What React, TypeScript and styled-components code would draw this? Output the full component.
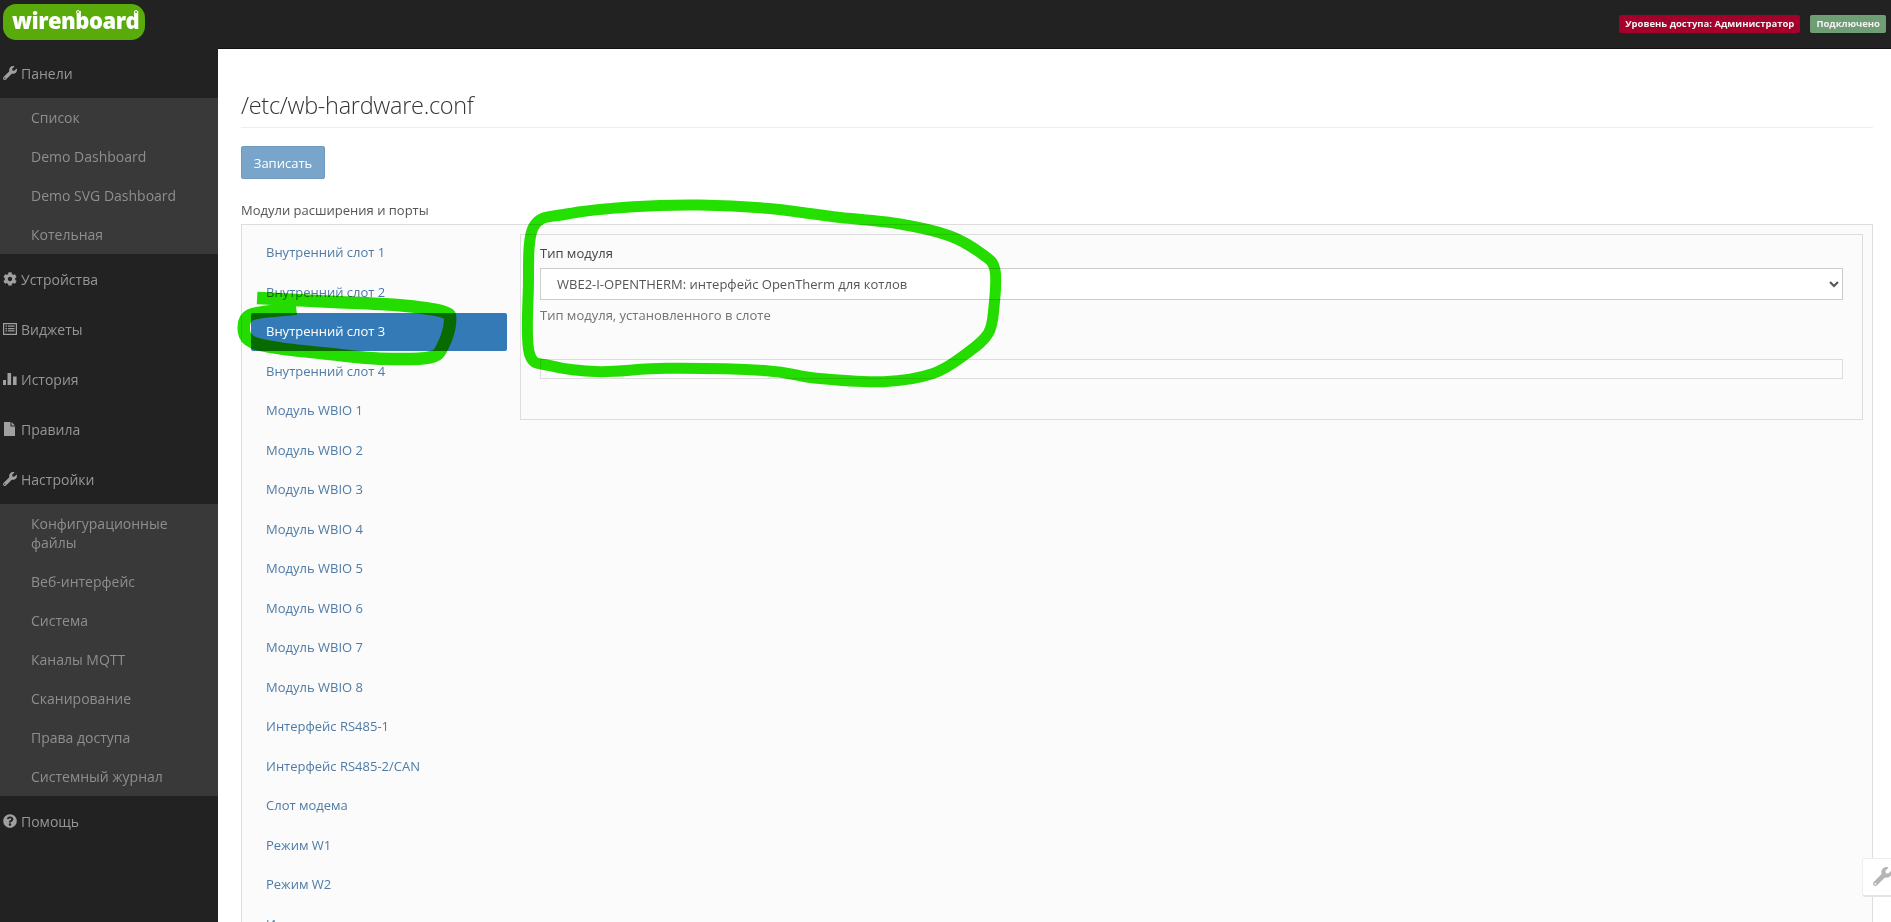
import React from "react";
import styled, { createGlobalStyle } from "styled-components";
import { FaWrench, FaCog, FaQuestionCircle } from "react-icons/fa";

const Global = createGlobalStyle`
  html, body { margin: 0; padding: 0; height: 100%; overflow: hidden; background: #222; }
  body { font-family: "Open Sans", "Liberation Sans", sans-serif; font-size: 13px; color: #555; }
  * { box-sizing: border-box; }
`;

const Page = styled.div`
  position: relative;
  width: 1891px;
  height: 922px;
  overflow: hidden;
  display: flex;
  flex-direction: column;
  background: #222;
`;

const TopBar = styled.header`
  height: 48px;
  flex: none;
  display: flex;
  align-items: flex-start;
  justify-content: space-between;
  background: #222;
`;

const Logo = styled.div`
  position: relative;
  width: 142px;
  height: 36px;
  margin: 4px 0 0 3px;
  background: #58ab0a;
  border-radius: 13px 14px 14px 13px;
  color: #fff;
  font-family: "Open Sans", sans-serif;
  font-weight: 800;
  font-size: 22px;
  line-height: 33px;
  letter-spacing: -0.5px;
  padding-left: 9px;
  white-space: nowrap;
`;

const LogoDot = styled.i<{ $left: number }>`
  position: absolute;
  top: 6px;
  left: ${(p) => p.$left}px;
  width: 4px;
  height: 4px;
  border: 1px solid #fff;
  border-radius: 50%;
  background: #58ab0a;
`;

const Badges = styled.div`
  display: flex;
  gap: 10px;
  margin: 15px 5px 0 0;
`;

const Badge = styled.span<{ $bg: string }>`
  height: 18px;
  padding: 0 6px;
  border-radius: 2px;
  background: ${(p) => p.$bg};
  color: #f2f2f2;
  font-size: 9.5px;
  font-weight: 700;
  line-height: 18px;
  white-space: nowrap;
`;

const Body = styled.div`
  flex: 1;
  display: flex;
  min-height: 0;
`;

const Sidebar = styled.nav`
  width: 218px;
  flex: none;
  background: #222;
`;

const MenuHead = styled.div`
  height: 50px;
  display: flex;
  align-items: center;
  gap: 4px;
  padding-left: 3px;
  color: #969696;
  font-size: 14px;
  svg { width: 14px; height: 14px; flex: none; fill: #a0a0a0; }
`;

const SubMenu = styled.div`
  background: #393939;
`;

const SubItem = styled.div`
  padding: 10px 20px 10px 31px;
  color: #8e8e8e;
  font-size: 14px;
  line-height: 19px;
`;

const Main = styled.main`
  flex: 1;
  min-width: 0;
  background: #fff;
  border-top: 1px solid #111;
  padding: 39px 18px 0 23px;
`;

const Title = styled.h1`
  margin: 0 0 18px;
  height: 40px;
  border-bottom: 1px solid #eee;
  color: #333;
  font-size: 23.5px;
  letter-spacing: -0.3px;
  font-weight: 300;
  line-height: 35px;
`;

const SaveButton = styled.button`
  display: block;
  width: 84px;
  height: 33px;
  padding: 0;
  border: 1px solid #6e9abf;
  border-radius: 2px;
  background: #7aa5ca;
  color: #fff;
  font: 13px "Open Sans", sans-serif;
`;

const SectionLabel = styled.div`
  margin: 22px 0 5px;
  color: #555;
  font-size: 13px;
  line-height: 18px;
`;

const Panel = styled.section`
  display: flex;
  align-items: flex-start;
  gap: 13px;
  height: 800px;
  padding: 9px;
  border: 1px solid #ddd;
  background: #fbfbfb;
`;

const SlotList = styled.ul`
  width: 256px;
  flex: none;
  margin: 0;
  padding: 0;
  list-style: none;
`;

const Slot = styled.li<{ $active?: boolean }>`
  height: 37.5px;
  margin-bottom: 2px;
  padding-left: 15px;
  border-radius: 2px;
  background: ${(p) => (p.$active ? "#337ab7" : "transparent")};
  color: ${(p) => (p.$active ? "#fff" : "#4f7ba6")};
  font-size: 13px;
  line-height: 37.5px;
`;

const SlotPanel = styled.div`
  flex: 1;
  min-width: 0;
  height: 185.5px;
  padding: 9px 19px 0 19px;
  border: 1px solid #ddd;
  background: #fbfbfb;
`;

const FieldLabel = styled.label`
  display: block;
  margin-bottom: 6px;
  color: #444;
  font-size: 13px;
  line-height: 18px;
`;

const Select = styled.select`
  display: block;
  width: 100%;
  height: 32px;
  padding: 0 8px 0 12px;
  border: 1px solid #ccc;
  border-radius: 0;
  background: #fff;
  color: #555;
  font: 13px "Open Sans", sans-serif;
`;

const Help = styled.div`
  margin-top: 6px;
  color: #737373;
  font-size: 13px;
  line-height: 18px;
`;

const EmptyField = styled.div`
  height: 20px;
  margin-top: 35px;
  border: 1px solid #ddd;
  background: #fcfcfc;
`;

const ToolButton = styled.div`
  position: absolute;
  left: 1862px;
  top: 858px;
  width: 60px;
  height: 39px;
  padding: 8px 0 0 10px;
  border: 1px solid #eee;
  border-bottom: 2px solid #e4e4e4;
  border-radius: 3px;
  background: #fff;
  svg { width: 19px; height: 19px; fill: #b5b5b5; }
`;

const Scribbles = styled.svg`
  position: absolute;
  inset: 0;
  width: 1891px;
  height: 922px;
  pointer-events: none;
  mix-blend-mode: multiply;
`;

type Pt = [number, number];

const smooth = (pts: Pt[], closed = false) => {
  const at = (i: number) =>
    closed ? pts[(i + pts.length) % pts.length] : pts[Math.max(0, Math.min(pts.length - 1, i))];
  let d = `M${pts[0][0]} ${pts[0][1]}`;
  const n = closed ? pts.length : pts.length - 1;
  for (let i = 0; i < n; i++) {
    const [p0, p1, p2, p3] = [at(i - 1), at(i), at(i + 1), at(i + 2)];
    d += `C${p1[0] + (p2[0] - p0[0]) / 6} ${p1[1] + (p2[1] - p0[1]) / 6} ${p2[0] - (p3[0] - p1[0]) / 6} ${p2[1] - (p3[1] - p1[1]) / 6} ${p2[0]} ${p2[1]}`;
  }
  return d;
};

const fromZoom = (ox: number, oy: number, pts: Pt[]): Pt[] =>
  pts.map(([x, y]) => [ox + x / 3, oy + y / 3]);

const slotLoop = fromZoom(230, 190, [
  [180, 358], [60, 375], [42, 425], [70, 458], [150, 475], [300, 492], [450, 506], [600, 502],
  [640, 465], [660, 395], [640, 365], [500, 345], [300, 335], [100, 325],
]);

const moduleLoop = fromZoom(500, 190, [
  [100, 112], [200, 72], [400, 50], [600, 45], [800, 55], [1000, 80], [1200, 102], [1350, 138],
  [1450, 195], [1485, 240], [1482, 350], [1465, 430], [1400, 490], [1300, 550], [1150, 575],
  [950, 565], [800, 542], [500, 535], [300, 545], [150, 527], [88, 490], [85, 300],
]);

const ListIcon = () => (
  <svg viewBox="0 0 14 14">
    <path fillRule="evenodd" d="M0 1h14v12H0zM1.2 2.2v9.6h11.6V2.2zM2.5 3.5h1.6v1.3H2.5zM5 3.5h6.5v1.3H5zM2.5 5.9h1.6v1.3H2.5zM5 5.9h6.5v1.3H5zM2.5 8.3h1.6v1.3H2.5zM5 8.3h6.5v1.3H5z" />
  </svg>
);

const BarsIcon = () => (
  <svg viewBox="0 0 14 14">
    <path d="M0 8h3v5H0zM4.500 1h3.600v12H4.500zM10 4.500h3.600V13H10z" />
  </svg>
);

const FileIcon = () => (
  <svg viewBox="0 0 14 14">
    <path d="M1 0h6.500v4.500H12V14H1zM8.500 0 12 3.500H8.500z" />
  </svg>
);

const panels = ["Список", "Demo Dashboard", "Demo SVG Dashboard", "Котельная"];
const settings = ["Конфигурационные файлы", "Веб-интерфейс", "Система", "Каналы MQTT", "Сканирование", "Права доступа", "Системный журнал"];
const slots = [
  "Внутренний слот 1", "Внутренний слот 2", "Внутренний слот 3", "Внутренний слот 4",
  "Модуль WBIO 1", "Модуль WBIO 2", "Модуль WBIO 3", "Модуль WBIO 4", "Модуль WBIO 5",
  "Модуль WBIO 6", "Модуль WBIO 7", "Модуль WBIO 8", "Интерфейс RS485-1", "Интерфейс RS485-2/CAN",
  "Слот модема", "Режим W1", "Режим W2", "Источник",
];

export default function App() {
  return (
    <Page>
      <Global />
      <TopBar>
        <Logo>
          wirenboard
          <LogoDot $left={73} />
          <LogoDot $left={131} />
        </Logo>
        <Badges>
          <Badge $bg="#a5002b">Уровень доступа: Администратор</Badge>
          <Badge $bg="#6f9e74">Подключено</Badge>
        </Badges>
      </TopBar>
      <Body>
        <Sidebar>
          <MenuHead><FaWrench />Панели</MenuHead>
          <SubMenu>{panels.map((t) => <SubItem key={t}>{t}</SubItem>)}</SubMenu>
          <MenuHead><FaCog />Устройства</MenuHead>
          <MenuHead><ListIcon />Виджеты</MenuHead>
          <MenuHead><BarsIcon />История</MenuHead>
          <MenuHead><FileIcon />Правила</MenuHead>
          <MenuHead><FaWrench />Настройки</MenuHead>
          <SubMenu>{settings.map((t) => <SubItem key={t}>{t}</SubItem>)}</SubMenu>
          <MenuHead><FaQuestionCircle />Помощь</MenuHead>
        </Sidebar>
        <Main>
          <Title>/etc/wb-hardware.conf</Title>
          <SaveButton>Записать</SaveButton>
          <SectionLabel>Модули расширения и порты</SectionLabel>
          <Panel>
            <SlotList>
              {slots.map((t, i) => <Slot key={t} $active={i === 2}>{t}</Slot>)}
            </SlotList>
            <SlotPanel>
              <FieldLabel>Тип модуля</FieldLabel>
              <Select defaultValue="ot">
                <option value="ot">WBE2-I-OPENTHERM: интерфейс OpenTherm для котлов</option>
              </Select>
              <Help>Тип модуля, установленного в слоте</Help>
              <EmptyField />
            </SlotPanel>
          </Panel>
        </Main>
      </Body>
      <ToolButton><FaWrench /></ToolButton>
      <Scribbles viewBox="0 0 1891 922">
        <path d={smooth(slotLoop)} fill="none" stroke="#24e000" strokeWidth="12.5" strokeLinecap="square" strokeLinejoin="round" />
        <path d={smooth(moduleLoop, true)} fill="none" stroke="#24e000" strokeWidth="11" strokeLinejoin="round" />
      </Scribbles>
    </Page>
  );
}
